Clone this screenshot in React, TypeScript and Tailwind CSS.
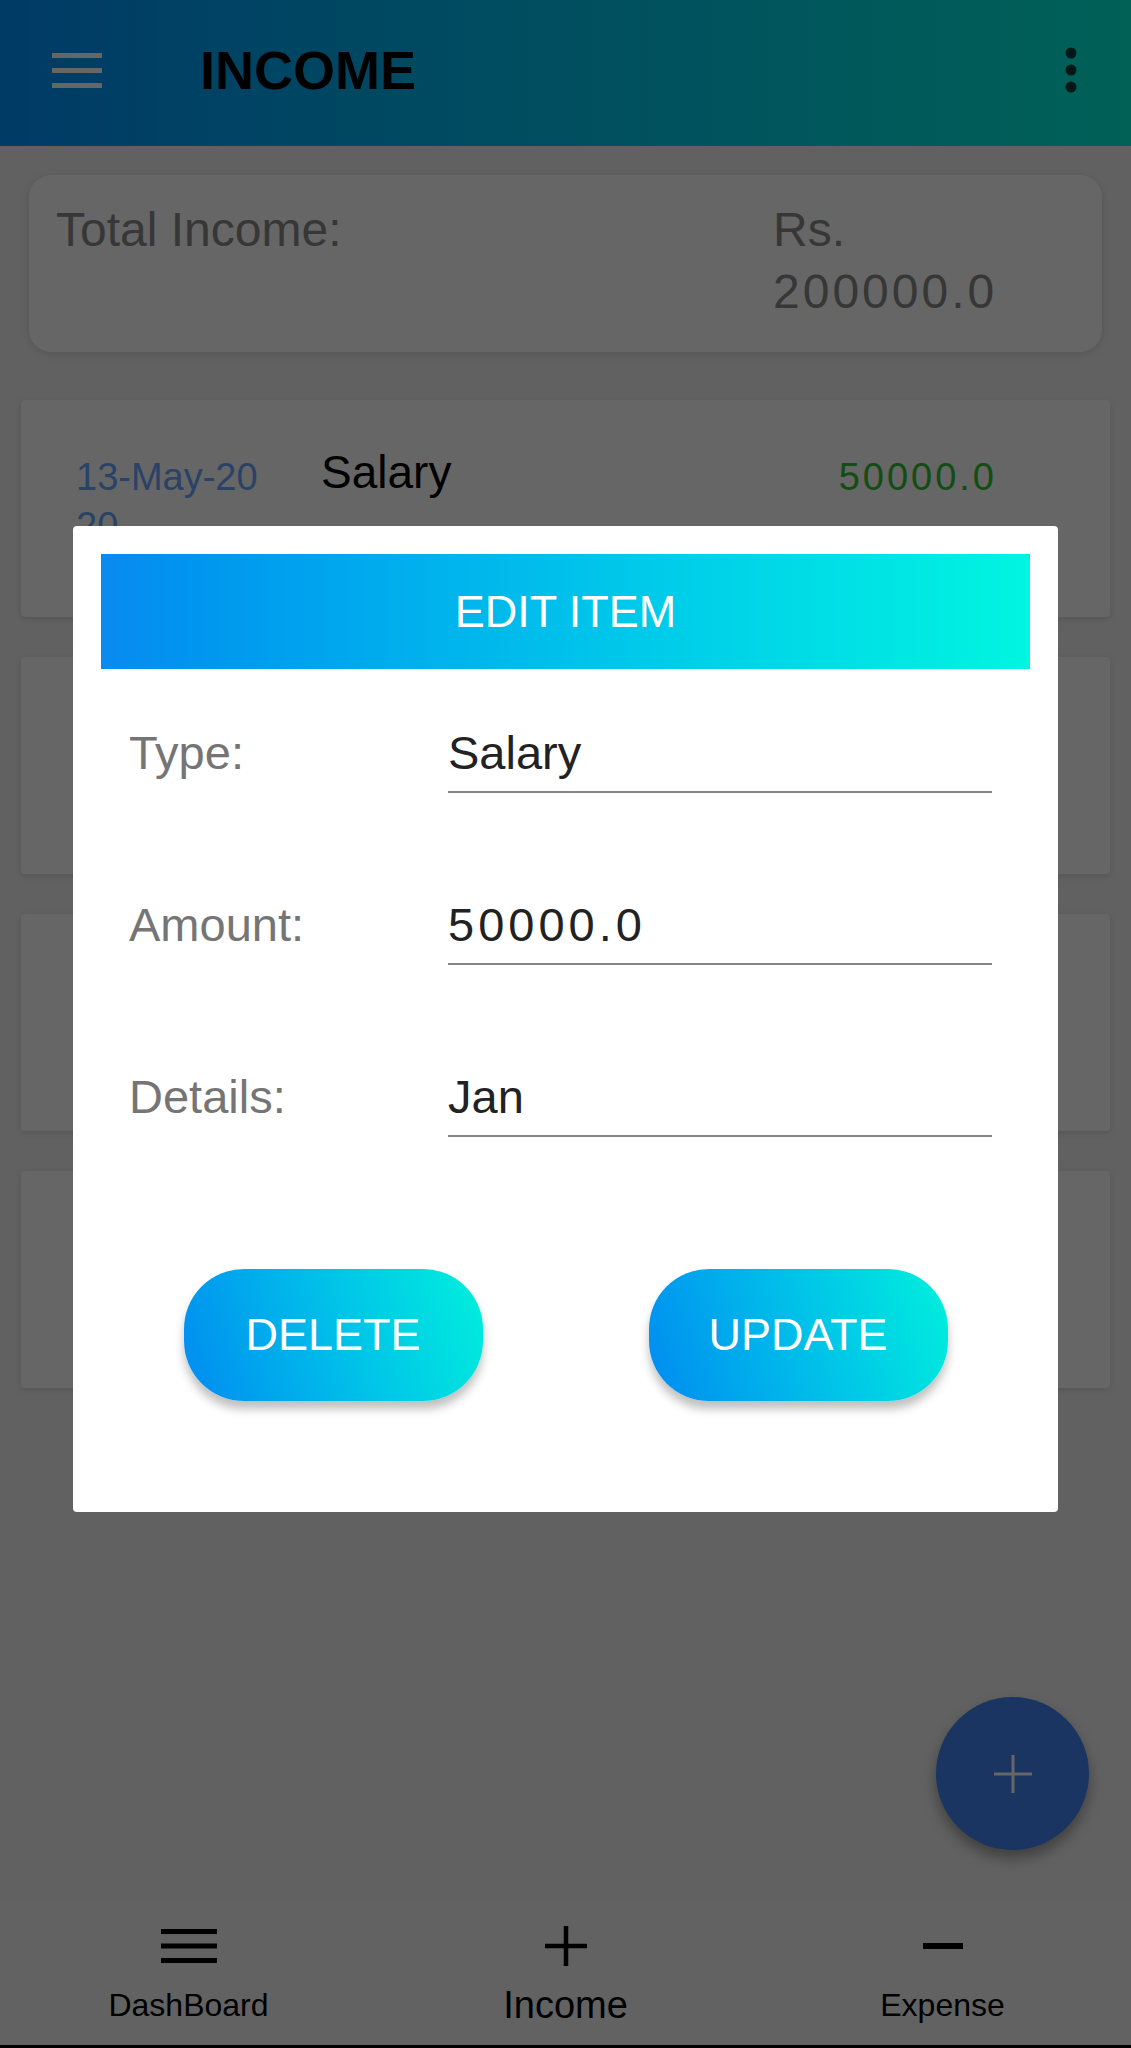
const items = [
  { date: '13-May-2020', type: 'Salary', amount: '50000.0' },
  { date: '13-May-2020', type: 'Salary', amount: '50000.0' },
  { date: '13-May-2020', type: 'Salary', amount: '50000.0' },
  { date: '13-May-2020', type: 'Salary', amount: '50000.0' },
];

const fields = [
  { label: 'Type:', value: 'Salary', num: false },
  { label: 'Amount:', value: '50000.0', num: true },
  { label: 'Details:', value: 'Jan', num: false },
];

function Bars({ w, h, t, color }: { w: number; h: number; t: number; color: string }) {
  const mid = (h - t) / 2;
  return (
    <svg width={w} height={h} viewBox={`0 0 ${w} ${h}`}>
      <rect x="0" y="0" width={w} height={t} fill={color} />
      <rect x="0" y={mid} width={w} height={t} fill={color} />
      <rect x="0" y={h - t} width={w} height={t} fill={color} />
    </svg>
  );
}

export default function App() {
  return (
    <div className="relative h-[2048px] w-[1131px] overflow-hidden bg-[#f2f2f2] font-['Liberation_Sans',Arial,sans-serif]">
      <div className="flex h-full flex-col">
        {/* app bar */}
        <header className="flex h-[146px] shrink-0 items-center bg-linear-to-r from-[#0093ff] to-[#00f2d8] pb-[6px] pl-[52px] pr-[54px]">
          <Bars w={50} h={35} t={5} color="#ffffff" />
          <h1 className="ml-[98px] text-[54px] leading-none font-bold text-black">INCOME</h1>
          <svg className="ml-auto" width="12" height="46" viewBox="0 0 12 46">
            <circle cx="6" cy="6" r="5.5" fill="rgba(0,0,0,0.75)" />
            <circle cx="6" cy="23" r="5.5" fill="rgba(0,0,0,0.75)" />
            <circle cx="6" cy="40" r="5.5" fill="rgba(0,0,0,0.75)" />
          </svg>
        </header>

        <main className="relative flex-1 px-[21px] pt-[29px]">
          <div className="mx-[8px] flex rounded-[22px] bg-white pt-[24px] pb-[29px] pl-[27px] text-[48px] leading-[62px] text-[#8a8a8a] shadow-[0_2px_8px_rgba(0,0,0,0.12)]">
            <div className="flex-1">Total Income:</div>
            <div className="mr-[59px] w-[270px]">
              Rs. <span className="tracking-[3px]">200000.0</span>
            </div>
          </div>

          <div className="mt-[48px] flex flex-col gap-[40px]">
            {items.map((it, i) => (
              <div
                key={i}
                className="flex h-[217px] items-start rounded-[4px] bg-white pt-[53px] shadow-[0_2px_6px_rgba(0,0,0,0.12)]"
              >
                <div className="ml-[55px] w-[190px] break-all text-[38px] leading-[49px] text-[#6aa6ff]">{it.date}</div>
                <div className="-mt-[5px] ml-[55px] text-[46px] leading-[49px] text-black">{it.type}</div>
                <div className="mr-[113px] ml-auto text-[38px] leading-[49px] tracking-[3px] text-[#30c030]">{it.amount}</div>
              </div>
            ))}
          </div>

          <button
            type="button"
            className="absolute right-[42px] bottom-[50px] flex h-[153px] w-[153px] items-center justify-center rounded-full bg-[#4285f4] shadow-[0_8px_14px_rgba(0,0,0,0.35)]"
          >
            <svg width="40" height="40" viewBox="0 0 40 40">
              <path d="M20 1v38M1 20h38" stroke="#ffffff" strokeWidth="3" />
            </svg>
          </button>
        </main>

        {/* bottom navigation */}
        <nav className="grid h-[148px] shrink-0 grid-cols-3 border-b-[3px] border-black bg-[#f5f5f5] text-black">
          <div className="flex flex-col items-center pt-[22px]">
            <div className="flex h-[48px] items-center justify-center">
              <Bars w={56} h={34} t={5} color="#000000" />
            </div>
            <div className="mt-[15px] text-[32px] leading-[40px]">DashBoard</div>
          </div>
          <div className="flex flex-col items-center pt-[22px]">
            <div className="flex h-[48px] items-center justify-center">
              <svg width="42" height="40" viewBox="0 0 42 40">
                <path d="M21 0v40M0 20h42" stroke="#000000" strokeWidth="4.5" />
              </svg>
            </div>
            <div className="mt-[15px] text-[38px] leading-[40px]">Income</div>
          </div>
          <div className="flex flex-col items-center pt-[22px]">
            <div className="flex h-[48px] items-center justify-center">
              <svg width="40" height="6" viewBox="0 0 40 6">
                <rect x="0" y="0" width="40" height="6" fill="#000000" />
              </svg>
            </div>
            <div className="mt-[15px] text-[32px] leading-[40px]">Expense</div>
          </div>
        </nav>
      </div>

      {/* scrim */}
      <div className="absolute inset-0 bg-black/60" />

      {/* edit dialog */}
      <div className="absolute inset-0 flex justify-center pt-[526px]">
        <div className="h-[986px] w-[985px] rounded-[4px] bg-white px-[28px] pt-[28px]">
          <div className="flex h-[115px] items-center justify-center bg-linear-to-r from-[#0a8af0] to-[#00f5e0] text-[45px] text-white">
            EDIT ITEM
          </div>

          <div className="mt-[56px] flex flex-col gap-[104px] px-[28px]">
            {fields.map((f) => (
              <div key={f.label} className="flex">
                <div className="w-[319px] text-[47px] leading-[56px] text-[#757575]">{f.label}</div>
                <div
                  className={`w-[544px] border-b-2 border-[#858585] pb-[10px] text-[47px] leading-[56px] text-[#222222] ${
                    f.num ? 'tracking-[4px]' : ''
                  }`}
                >
                  {f.value}
                </div>
              </div>
            ))}
          </div>

          <div className="mt-[132px] flex justify-center gap-[166px]">
            {['DELETE', 'UPDATE'].map((b) => (
              <button
                key={b}
                type="button"
                className="flex h-[132px] w-[299px] items-center justify-center rounded-[60px] bg-linear-70 from-[#0a8af0] to-[#00f0dc] text-[45px] text-white shadow-[0_8px_10px_rgba(0,0,0,0.25)]"
              >
                {b}
              </button>
            ))}
          </div>
        </div>
      </div>
    </div>
  );
}
